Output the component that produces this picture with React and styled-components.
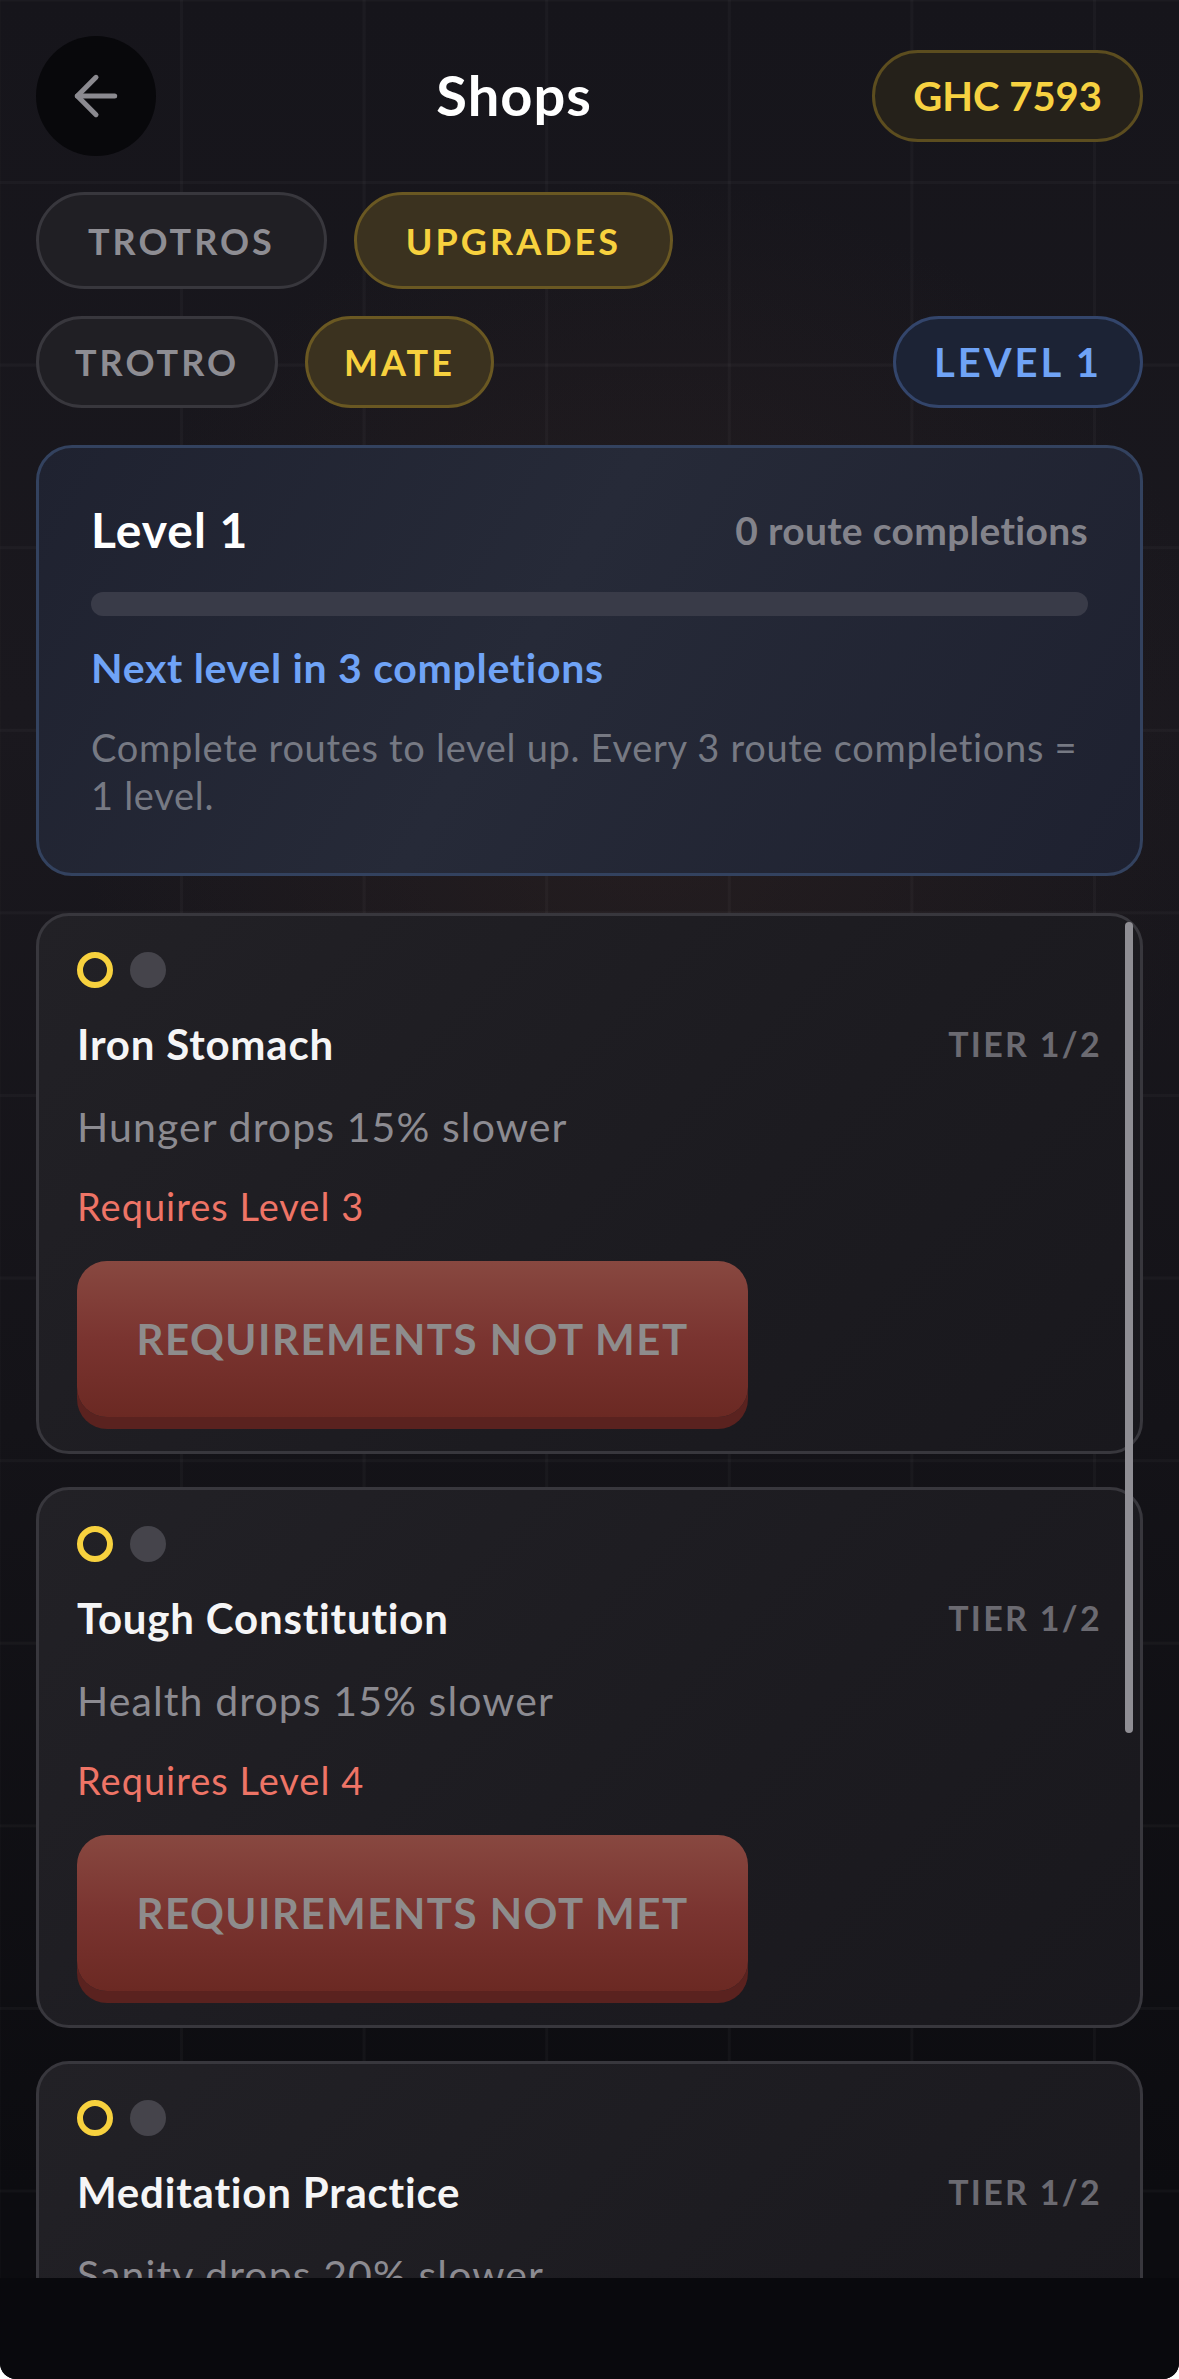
import React from 'react';
import styled, { createGlobalStyle } from 'styled-components';
import { ArrowLeft } from 'lucide-react';

const GlobalStyle = createGlobalStyle`
  html, body {
    margin: 0;
    padding: 0;
    background: #ffffff;
  }
  * {
    box-sizing: border-box;
  }
`;

const Screen = styled.div`
  width: 1179px;
  height: 2379px;
  display: flex;
  flex-direction: column;
  overflow: hidden;
  border-radius: 0 0 16px 16px;
  font-family: Lato, 'Noto Sans', sans-serif;
  background-color: #141318;
  background-image:
    linear-gradient(to right, rgba(255, 255, 255, 0.028) 3px, transparent 3px),
    linear-gradient(to bottom, rgba(255, 255, 255, 0.028) 3px, transparent 3px),
    radial-gradient(ellipse 70% 35% at 55% 32%, rgba(60, 42, 38, 0.35), transparent 70%),
    linear-gradient(180deg, #16151b 0%, #1a181e 30%, #141318 60%, #0c0c10 92%);
  background-size: 182.6px 182.6px, 182.6px 182.6px, 100% 100%, 100% 100%;
  background-position: 180px 0, 0 181px, 0 0, 0 0;
`;

const Main = styled.div`
  flex: 1;
  min-height: 0;
  display: flex;
  flex-direction: column;
  padding: 36px 36px 0;
`;

const Header = styled.header`
  display: flex;
  align-items: center;
  justify-content: space-between;
  height: 120px;
`;

const BackButton = styled.button`
  width: 120px;
  height: 120px;
  border-radius: 50%;
  border: none;
  background: #08080b;
  color: #8b8a90;
  display: flex;
  align-items: center;
  justify-content: center;
  padding: 0;
`;

const Title = styled.h1`
  margin: 0 0 4px;
  font-size: 56px;
  font-weight: 700;
  letter-spacing: 1px;
  color: #ffffff;
`;

const Pill = styled.div`
  display: inline-flex;
  align-items: center;
  justify-content: center;
  height: ${(p) => p.$h || 92}px;
  padding: 0 ${(p) => p.$pad || 38}px;
  border-radius: 999px;
  border: 3px solid ${(p) => p.$border};
  background: ${(p) => p.$bg};
  color: ${(p) => p.$color};
  font-size: ${(p) => p.$size || 36}px;
  font-weight: 700;
  letter-spacing: ${(p) => p.$spacing ?? 3}px;
  white-space: nowrap;
`;

const tone = {
  idle: { $bg: '#201f24', $border: '#38373d', $color: '#8e8d93' },
  gold: { $bg: '#3b321f', $border: '#6a5822', $color: '#f7d13e' },
  coin: { $bg: '#25211a', $border: '#5c4d1f', $color: '#f7d241' },
  blue: { $bg: '#1c2335', $border: '#33456b', $color: '#6fa3f6' },
};

const TabRow = styled.div`
  display: flex;
  align-items: center;
  gap: 27px;
  margin-top: ${(p) => p.$top}px;
`;

const Spacer = styled.div`
  flex: 1;
`;

const LevelCard = styled.section`
  margin-top: 37px;
  padding: 52px 52px 54px;
  border-radius: 36px;
  border: 3px solid #33425f;
  background: linear-gradient(120deg, #1f2230 0%, #262a38 45%, #1e2130 100%);
`;

const LevelHead = styled.div`
  display: flex;
  align-items: center;
  justify-content: space-between;
  line-height: 60px;
`;

const LevelTitle = styled.div`
  font-size: 48px;
  font-weight: 700;
  letter-spacing: 1px;
  color: #ffffff;
`;

const Completions = styled.div`
  font-size: 39px;
  font-weight: 700;
  letter-spacing: 0.3px;
  color: #83838b;
`;

const ProgressTrack = styled.div`
  margin-top: 32px;
  height: 24px;
  border-radius: 12px;
  background: #393b48;
  overflow: hidden;
`;

const ProgressFill = styled.div`
  height: 100%;
  background: #6fa3f6;
`;

const NextLevel = styled.div`
  margin-top: 26px;
  font-size: 41px;
  line-height: 52px;
  font-weight: 700;
  letter-spacing: 0.7px;
  color: #6fa3f6;
`;

const LevelHint = styled.p`
  margin: 29px 0 0;
  font-size: 38px;
  line-height: 48px;
  letter-spacing: 0.7px;
  color: #767983;
`;

const ListViewport = styled.div`
  position: relative;
  flex: 1;
  min-height: 0;
  margin-top: 37px;
  overflow: hidden;
`;

const List = styled.div`
  display: flex;
  flex-direction: column;
  gap: 33px;
`;

const ScrollThumb = styled.div`
  position: absolute;
  top: 9px;
  right: 10px;
  width: 8px;
  height: 811px;
  border-radius: 4px;
  background: #8f8e94;
`;

const UpgradeCard = styled.article`
  padding: 36px 38px 34px;
  border-radius: 33px;
  border: 3px solid #38373d;
  background: linear-gradient(135deg, #222126 0%, #1c1b20 60%, #19181d 100%);
`;

const Dots = styled.div`
  display: flex;
  gap: 17px;
`;

const Dot = styled.span`
  width: 36px;
  height: 36px;
  border-radius: 50%;
  ${(p) =>
    p.$active
      ? 'border: 6px solid #f7d13e; background: transparent;'
      : 'background: #45444b;'}
`;

const CardHead = styled.div`
  margin-top: 30px;
  display: flex;
  align-items: center;
  justify-content: space-between;
  line-height: 52px;
`;

const CardTitle = styled.h2`
  margin: 0;
  font-size: 42px;
  font-weight: 700;
  letter-spacing: 0.8px;
  color: #f5f5f6;
`;

const Tier = styled.span`
  font-size: 34px;
  font-weight: 700;
  letter-spacing: 2.3px;
  color: #6b6a71;
`;

const Effect = styled.div`
  margin-top: 31px;
  font-size: 41px;
  line-height: 52px;
  letter-spacing: 1.1px;
  color: #8c8b91;
`;

const Requirement = styled.div`
  margin-top: 29px;
  font-size: 38px;
  line-height: 48px;
  letter-spacing: 1px;
  color: #ee7466;
`;

const LockedButton = styled.button`
  margin-top: 31px;
  width: 671px;
  height: 156px;
  border: none;
  border-radius: 30px;
  background: linear-gradient(180deg, #884840 0%, #7a3430 50%, #6b2923 100%);
  box-shadow: 0 12px 0 #5a221f;
  color: #8e8c8c;
  font-family: inherit;
  font-size: 42px;
  font-weight: 700;
  letter-spacing: 1.5px;
`;

const BottomBar = styled.div`
  height: 101px;
  flex-shrink: 0;
  background: #09090d;
`;

const upgrades = [
  { name: 'Iron Stomach', effect: 'Hunger drops 15% slower', level: 3 },
  { name: 'Tough Constitution', effect: 'Health drops 15% slower', level: 4 },
  { name: 'Meditation Practice', effect: 'Sanity drops 20% slower', level: 5 },
];

const App = () => {
  const completions = 0;
  return (
    <Screen>
      <GlobalStyle />
      <Main>
        <Header>
          <BackButton aria-label="Back">
            <ArrowLeft size={64} strokeWidth={1.9} />
          </BackButton>
          <Title>Shops</Title>
          <Pill {...tone.coin} $h={92} $pad={38} $size={40} $spacing={0}>
            GHC 7593
          </Pill>
        </Header>

        <TabRow $top={36}>
          <Pill {...tone.idle} $h={97} $pad={49}>TROTROS</Pill>
          <Pill {...tone.gold} $h={97} $pad={49}>UPGRADES</Pill>
        </TabRow>

        <TabRow $top={27}>
          <Pill {...tone.idle} $pad={36}>TROTRO</Pill>
          <Pill {...tone.gold} $pad={36}>MATE</Pill>
          <Spacer />
          <Pill {...tone.blue} $size={40}>LEVEL 1</Pill>
        </TabRow>

        <LevelCard>
          <LevelHead>
            <LevelTitle>Level 1</LevelTitle>
            <Completions>{completions} route completions</Completions>
          </LevelHead>
          <ProgressTrack>
            <ProgressFill style={{ width: `${(completions / 3) * 100}%` }} />
          </ProgressTrack>
          <NextLevel>Next level in 3 completions</NextLevel>
          <LevelHint>
            Complete routes to level up. Every 3 route completions = 1 level.
          </LevelHint>
        </LevelCard>

        <ListViewport>
          <List>
            {upgrades.map((u) => (
              <UpgradeCard key={u.name}>
                <Dots>
                  <Dot $active />
                  <Dot />
                </Dots>
                <CardHead>
                  <CardTitle>{u.name}</CardTitle>
                  <Tier>TIER 1/2</Tier>
                </CardHead>
                <Effect>{u.effect}</Effect>
                <Requirement>Requires Level {u.level}</Requirement>
                <LockedButton>REQUIREMENTS NOT MET</LockedButton>
              </UpgradeCard>
            ))}
          </List>
          <ScrollThumb />
        </ListViewport>
      </Main>
      <BottomBar />
    </Screen>
  );
};

export default App;
